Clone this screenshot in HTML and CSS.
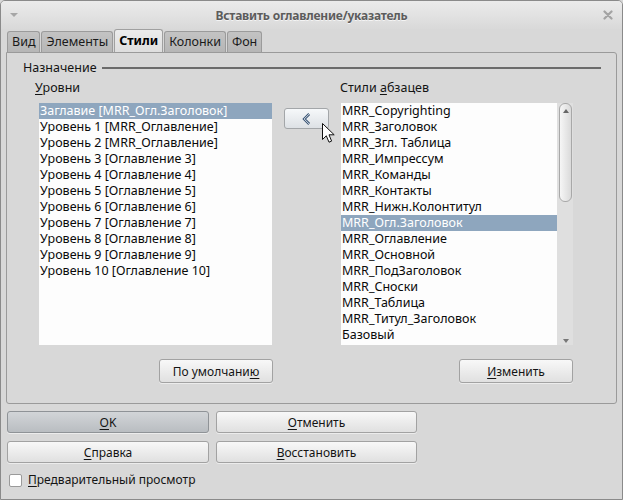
FILE: index.html
```html
<!DOCTYPE html>
<html lang="ru">
<head>
<meta charset="utf-8">
<title>Вставить оглавление/указатель</title>
<link rel="stylesheet" href="styles.css">
</head>
<body>
<div class="window">
  <div class="titlebar">
    <span class="menu-tri"></span>
    <span class="title">Вставить оглавление/указатель</span>
    <svg class="close" width="10" height="10" viewBox="0 0 10 10"><path d="M1.5 1.5 L8.5 8.5 M8.5 1.5 L1.5 8.5" stroke="#a3a3a3" stroke-width="2.2" stroke-linecap="round"/></svg>
  </div>
  <div class="content">
    <div class="tabs">
      <div class="tab">Вид</div>
      <div class="tab">Элементы</div>
      <div class="tab active">Стили</div>
      <div class="tab">Колонки</div>
      <div class="tab">Фон</div>
    </div>
    <div class="panel">
      <div class="section-head"><span>Назначение</span><span class="rule"></span></div>
      <div class="cols">
        <div class="col col-left">
          <div class="label label-left"><u>У</u>ровни</div>
          <div class="listbox list-left">
            <div class="row selected">Заглавие [MRR_Огл.Заголовок]</div>
            <div class="row">Уровень 1 [MRR_Оглавление]</div>
            <div class="row">Уровень 2 [MRR_Оглавление]</div>
            <div class="row">Уровень 3 [Оглавление 3]</div>
            <div class="row">Уровень 4 [Оглавление 4]</div>
            <div class="row">Уровень 5 [Оглавление 5]</div>
            <div class="row">Уровень 6 [Оглавление 6]</div>
            <div class="row">Уровень 7 [Оглавление 7]</div>
            <div class="row">Уровень 8 [Оглавление 8]</div>
            <div class="row">Уровень 9 [Оглавление 9]</div>
            <div class="row">Уровень 10 [Оглавление 10]</div>
          </div>
          <div class="btn-row"><button class="btn btn-wide">По умолчани<u>ю</u></button></div>
        </div>
        <div class="col col-mid">
          <button class="arrow-btn" aria-label="Назначить">
            <svg width="10" height="12" viewBox="0 0 10 12"><path d="M7.2 1 L2.2 6 L7.2 11" fill="none" stroke="#3b5675" stroke-width="2.6" stroke-linejoin="miter" stroke-linecap="butt"/><path d="M7.2 1 L2.2 6 L7.2 11" fill="none" stroke="#e8eef5" stroke-width="0.9" stroke-linejoin="miter" stroke-linecap="butt"/></svg>
          </button>
          <svg class="cursor" width="14" height="22" viewBox="0 0 14 22"><path d="M0.5 0.5 L0.5 16.5 L4.3 12.8 L7 19.2 L9.6 18.1 L7 11.8 L12.2 11.8 Z" fill="#ffffff" stroke="#111111" stroke-width="1" stroke-linejoin="round"/></svg>
        </div>
        <div class="col col-right">
          <div class="label">Стили <u>а</u>бзацев</div>
          <div class="listwrap">
            <div class="listbox list-right">
              <div class="row">MRR_Copyrighting</div>
              <div class="row">MRR_Заголовок</div>
              <div class="row">MRR_Згл. Таблица</div>
              <div class="row">MRR_Импрессум</div>
              <div class="row">MRR_Команды</div>
              <div class="row">MRR_Контакты</div>
              <div class="row">MRR_Нижн.Колонтитул</div>
              <div class="row selected">MRR_Огл.Заголовок</div>
              <div class="row">MRR_Оглавление</div>
              <div class="row">MRR_Основной</div>
              <div class="row">MRR_ПодЗаголовок</div>
              <div class="row">MRR_Сноски</div>
              <div class="row">MRR_Таблица</div>
              <div class="row">MRR_Титул_Заголовок</div>
              <div class="row">Базовый</div>
            </div>
            <div class="scrollbar">
              <div class="thumb"><span class="tri-up"></span></div>
              <span class="tri-down"></span>
            </div>
          </div>
          <div class="btn-row"><button class="btn btn-wide"><u>И</u>зменить</button></div>
        </div>
      </div>
    </div>
    <div class="actions">
      <button class="btn btn-default"><u>O</u>K</button>
      <button class="btn"><u>О</u>тменить</button>
      <button class="btn"><u>С</u>правка</button>
      <button class="btn"><u>В</u>осстановить</button>
    </div>
    <label class="check-row"><span class="checkbox"></span><span><u>П</u>редварительный просмотр</span></label>
  </div>
</div>
</body>
</html>
```
FILE: styles.css
```css
* { box-sizing: border-box; }
body {
  margin: 0;
  font-family: "Noto Sans", "Open Sans", "DejaVu Sans", sans-serif;
  font-size: 12px;
  color: #141414;
  background: #d8d8d8;
}
u { text-decoration: underline; text-underline-offset: 2px; }

.window {
  width: 623px;
  height: 500px;
  border: 1px solid #8a8a8a;
  border-radius: 5px 5px 0 0;
  background: #d8d8d8;
  display: flex;
  flex-direction: column;
  overflow: hidden;
}

.titlebar {
  height: 28px;
  flex: none;
  display: grid;
  grid-template-columns: 1fr auto 1fr;
  align-items: center;
  padding: 0 8px;
  background: linear-gradient(#ebebeb, #d9d9d9);
}
.menu-tri {
  width: 0; height: 0;
  margin-left: 1px;
  border-left: 4px solid transparent;
  border-right: 4px solid transparent;
  border-top: 4px solid #a6a6a6;
}
.title {
  font-weight: bold;
  font-size: 12px;
  color: #5c5c5c;
  letter-spacing: -0.2px;
  text-shadow: 0 1px 0 #f4f4f4;
}
.close { justify-self: end; margin-right: 1px; }

.content {
  flex: 1;
  display: flex;
  flex-direction: column;
  padding: 0 5px;
}

.tabs {
  height: 23px;
  flex: none;
  display: flex;
  align-items: flex-end;
  gap: 1px;
  padding-left: 1px;
}
.tab {
  height: 21px;
  padding: 0 4px;
  border: 1px solid #9b9b9b;
  border-bottom: none;
  border-radius: 3px 3px 0 0;
  background: linear-gradient(#c3c3c3, #b6b6b6);
  line-height: 20px;
  font-size: 12.5px;
  color: #1a1a1a;
}
.tab.active {
  height: 23px;
  line-height: 21px;
  background: linear-gradient(#ececec, #dedede);
  font-weight: bold;
  color: #000;
  border-color: #a0a0a0;
}

.panel {
  height: 352px;
  flex: none;
  border: 1px solid #9a9a9a;
  border-radius: 0 3px 3px 3px;
  padding: 7px 15px 0 16px;
}

.section-head {
  display: flex;
  align-items: center;
  gap: 5px;
  line-height: 16px;
  font-size: 12.5px;
}
.rule {
  flex: 1;
  height: 2px;
  background: #6b6b6b;
}

.cols {
  display: flex;
  margin-top: 4px;
  padding-left: 16px;
}
.col { display: flex; flex-direction: column; }
.col-left { width: 234px; }
.col-mid { width: 67px; position: relative; }
.col-right { width: 233px; }

.label {
  line-height: 16px;
  font-size: 12.5px;
}
.label-left { margin-left: -4px; }

.listbox {
  margin-top: 7px;
  height: 242px;
  background: #fdfdfd;
  font-size: 12.5px;
}
.list-left { width: 233px; }
.listwrap { display: flex; margin-top: 7px; height: 242px; }
.listwrap .listbox { margin: 0 0 0 1px; width: 216px; }
.row {
  height: 16px;
  line-height: 16px;
  padding-left: 1px;
  white-space: nowrap;
  color: #0a0a0a;
}
.row.selected {
  background: #8ea6be;
  color: #ffffff;
}

.scrollbar {
  width: 16px;
  background: #dfdfdf;
  display: flex;
  flex-direction: column;
  align-items: center;
  padding: 0 0 2px 1px;
}
.thumb {
  width: 13px;
  height: 99px;
  border: 1px solid #a8a8a8;
  border-radius: 6px;
  background: linear-gradient(90deg, #f6f6f6, #dadada);
  display: flex;
  justify-content: center;
  padding-top: 5px;
}
.tri-up, .tri-down {
  width: 0; height: 0;
  border-left: 3px solid transparent;
  border-right: 3px solid transparent;
}
.tri-up { border-bottom: 4px solid #666; }
.tri-down { border-top: 4px solid #777; margin-top: auto; }

.btn-row {
  display: flex;
  justify-content: flex-end;
  margin-top: 14px;
}
.btn {
  font: inherit;
  font-size: 12px;
  color: #141414;
  height: 22px;
  padding: 0;
  border: 1px solid #a2a2a2;
  border-radius: 3px;
  background: linear-gradient(#f8f8f8, #e0e0e0);
  box-shadow: 0 1px 0 rgba(255,255,255,0.5);
}
.btn-wide { width: 114px; height: 24px; }
.btn-default {
  background: linear-gradient(#d2d5d8, #b9bdc1);
  border-color: #8f9397;
}

.arrow-btn {
  margin: 28px 0 0 11px;
  width: 45px;
  height: 21px;
  padding: 0;
  border: 1px solid #a3a6a9;
  border-radius: 3px;
  background: linear-gradient(#f6f8fa, #dde1e5);
  display: flex;
  align-items: center;
  justify-content: center;
}
.cursor {
  position: absolute;
  left: 49px;
  top: 43px;
}

.actions {
  display: grid;
  grid-template-columns: 202px 201px;
  column-gap: 7px;
  row-gap: 8px;
  margin-top: 7px;
  padding-left: 1px;
}

.check-row {
  display: flex;
  align-items: center;
  gap: 6px;
  margin-top: 9px;
  padding-left: 3px;
  font-size: 12px;
  line-height: 16px;
}
.checkbox {
  width: 13px;
  height: 13px;
  border: 1px solid #9a9a9a;
  border-radius: 2px;
  background: #ffffff;
}
```
